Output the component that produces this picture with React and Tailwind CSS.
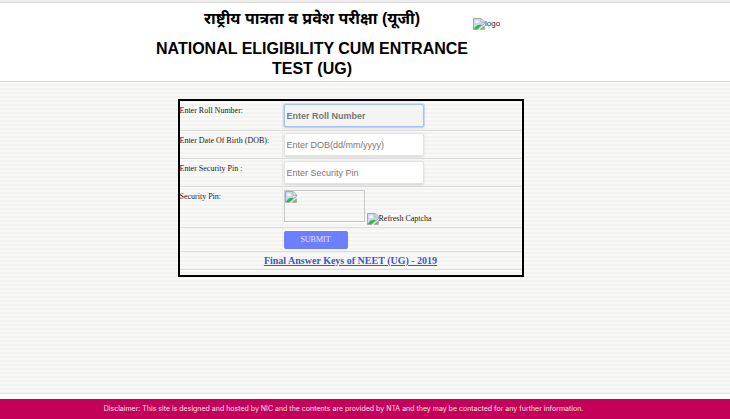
import React from 'react';

// Placeholder shown where an image could not be loaded
const BrokenImage = () => (
  <svg className="w-3 h-3 shrink-0" viewBox="0 0 12 12" aria-hidden="true">
    <path d="M0.5 0.5H8L11.5 4V5.5L4.5 11.5H0.5Z" fill="#cdd5f8" stroke="#a8a8a8" />
    <path d="M8 0.5V4H11.5Z" fill="#fff" stroke="#a3a3a3" strokeWidth="0.8" />
    <ellipse cx="4" cy="3.8" rx="1.8" ry="1.2" fill="#fff" />
    <path d="M1 11C2 8.5 5 6 8.8 7L4.3 11Z" fill="#1fc02c" />
    <path d="M6.8 11.5L11.5 7.5V11.5Z" fill="#6bbd70" stroke="#a3a3a3" strokeWidth="0.6" />
  </svg>
);

const fields = [
  {
    id: 'roll',
    label: 'Enter Roll Number:',
    placeholder: 'Enter Roll Number',
    row: 'h-[30px]',
    style: 'bg-[#f4f4f4] border-[#a4c3f3] ring-1 ring-[#a4c3f3]/50 font-bold',
  },
  {
    id: 'dob',
    label: 'Enter Date Of Birth (DOB):',
    placeholder: 'Enter DOB(dd/mm/yyyy)',
    row: 'h-[28px]',
    style: 'bg-white border-[#e2e2e2]',
  },
  {
    id: 'pin',
    label: 'Enter Security Pin :',
    placeholder: 'Enter Security Pin',
    row: 'h-[28px]',
    style: 'bg-white border-[#e2e2e2]',
  },
];

const labelCell = 'w-[103px] align-top pt-1 whitespace-nowrap border-r border-[#ececea]';

const Header = () => (
  <header className="bg-white border-y border-[#d9d9d9] h-20 mt-0.5">
    <div className="flex w-[422px] mx-auto">
      <div className="w-[316px] shrink-0 text-center font-bold text-[16px] leading-5 text-black">
        <h1 className="mt-1 leading-6 font-['Liberation_Sans','Noto_Sans_Devanagari',sans-serif]">
          राष्ट्रीय पात्रता व प्रवेश परीक्षा (यूजी)
        </h1>
        <h2 className="mt-2">NATIONAL ELIGIBILITY CUM ENTRANCE TEST (UG)</h2>
      </div>
      <div className="flex items-center h-3 mt-[15px] ml-[3px] text-[8px]">
        <BrokenImage />
        <span>logo</span>
      </div>
    </div>
  </header>
);

const LoginForm = () => (
  <form className="w-[346px] mx-auto mt-[17px]" onSubmit={(e) => e.preventDefault()}>
    <table className="w-full table-fixed border-2 border-black border-separate border-spacing-0 font-['Liberation_Serif',serif] text-[8px] leading-3">
      <tbody>
        {fields.map((field) => (
          <tr key={field.id} className={field.row}>
            <td className={`${labelCell} border-b border-b-[#dcdcda]`}>
              <label htmlFor={field.id}>{field.label}</label>
            </td>
            <td className="border-b border-[#dcdcda] pl-px align-middle">
              <input
                id={field.id}
                type="text"
                placeholder={field.placeholder}
                className={`block w-[140px] h-[23px] px-0.5 border rounded-xs shadow-sm outline-none font-['Liberation_Sans',sans-serif] text-[9px] placeholder:text-[#777] ${field.style}`}
              />
            </td>
          </tr>
        ))}
        <tr className="h-[41px]">
          <td className={`${labelCell} border-b border-b-[#dcdcda]`}>Security Pin:</td>
          <td className="border-b border-[#dcdcda] pl-px align-top pt-[3px]">
            <div className="flex items-start gap-0.5">
              <div className="w-[81px] h-8 border border-[#c8c8c8]">
                <BrokenImage />
              </div>
              <div className="flex items-center h-3 mt-[23px]">
                <BrokenImage />
                <span>Refresh Captcha</span>
              </div>
            </div>
          </td>
        </tr>
        <tr className="h-6">
          <td className={`${labelCell} border-b border-b-[#dcdcda]`} />
          <td className="border-b border-[#dcdcda] pl-px align-middle">
            <button type="submit" className="block w-16 h-[18px] rounded-xs bg-[#6b7fff] text-[#e6e8ff]">
              SUBMIT
            </button>
          </td>
        </tr>
        <tr className="h-[18px]">
          <td colSpan={2} className="border-b border-[#dcdcda] text-center">
            <a href="#answer-keys" className="block text-[10px] leading-4 font-bold underline text-[#4355c4]">
              Final Answer Keys of NEET (UG) - 2019
            </a>
          </td>
        </tr>
        <tr className="h-[5px]">
          <td colSpan={2} />
        </tr>
      </tbody>
    </table>
  </form>
);

const App = () => (
  <div className="min-h-screen flex flex-col bg-[#eeeeee] font-['Liberation_Sans',sans-serif] text-[#222]">
    <Header />
    <main className="grow pb-6 pr-[29px] border-b border-[#e4e4e2] bg-[repeating-linear-gradient(to_bottom,#f9f9f7_0px,#f9f9f7_2px,#f3f3f1_2px,#f3f3f1_4px)]">
      <LoginForm />
    </main>
    <footer className="border-t-5 border-white">
      <p className="h-5 pr-[43px] bg-[#c4005a] text-center font-['Inter','Liberation_Sans',sans-serif] text-[7px] leading-5 text-[#fbe3ee]">
        Disclaimer: This site is designed and hosted by NIC and the contents are provided by NTA and they may be contacted for any further information.
      </p>
    </footer>
  </div>
);

export default App;
